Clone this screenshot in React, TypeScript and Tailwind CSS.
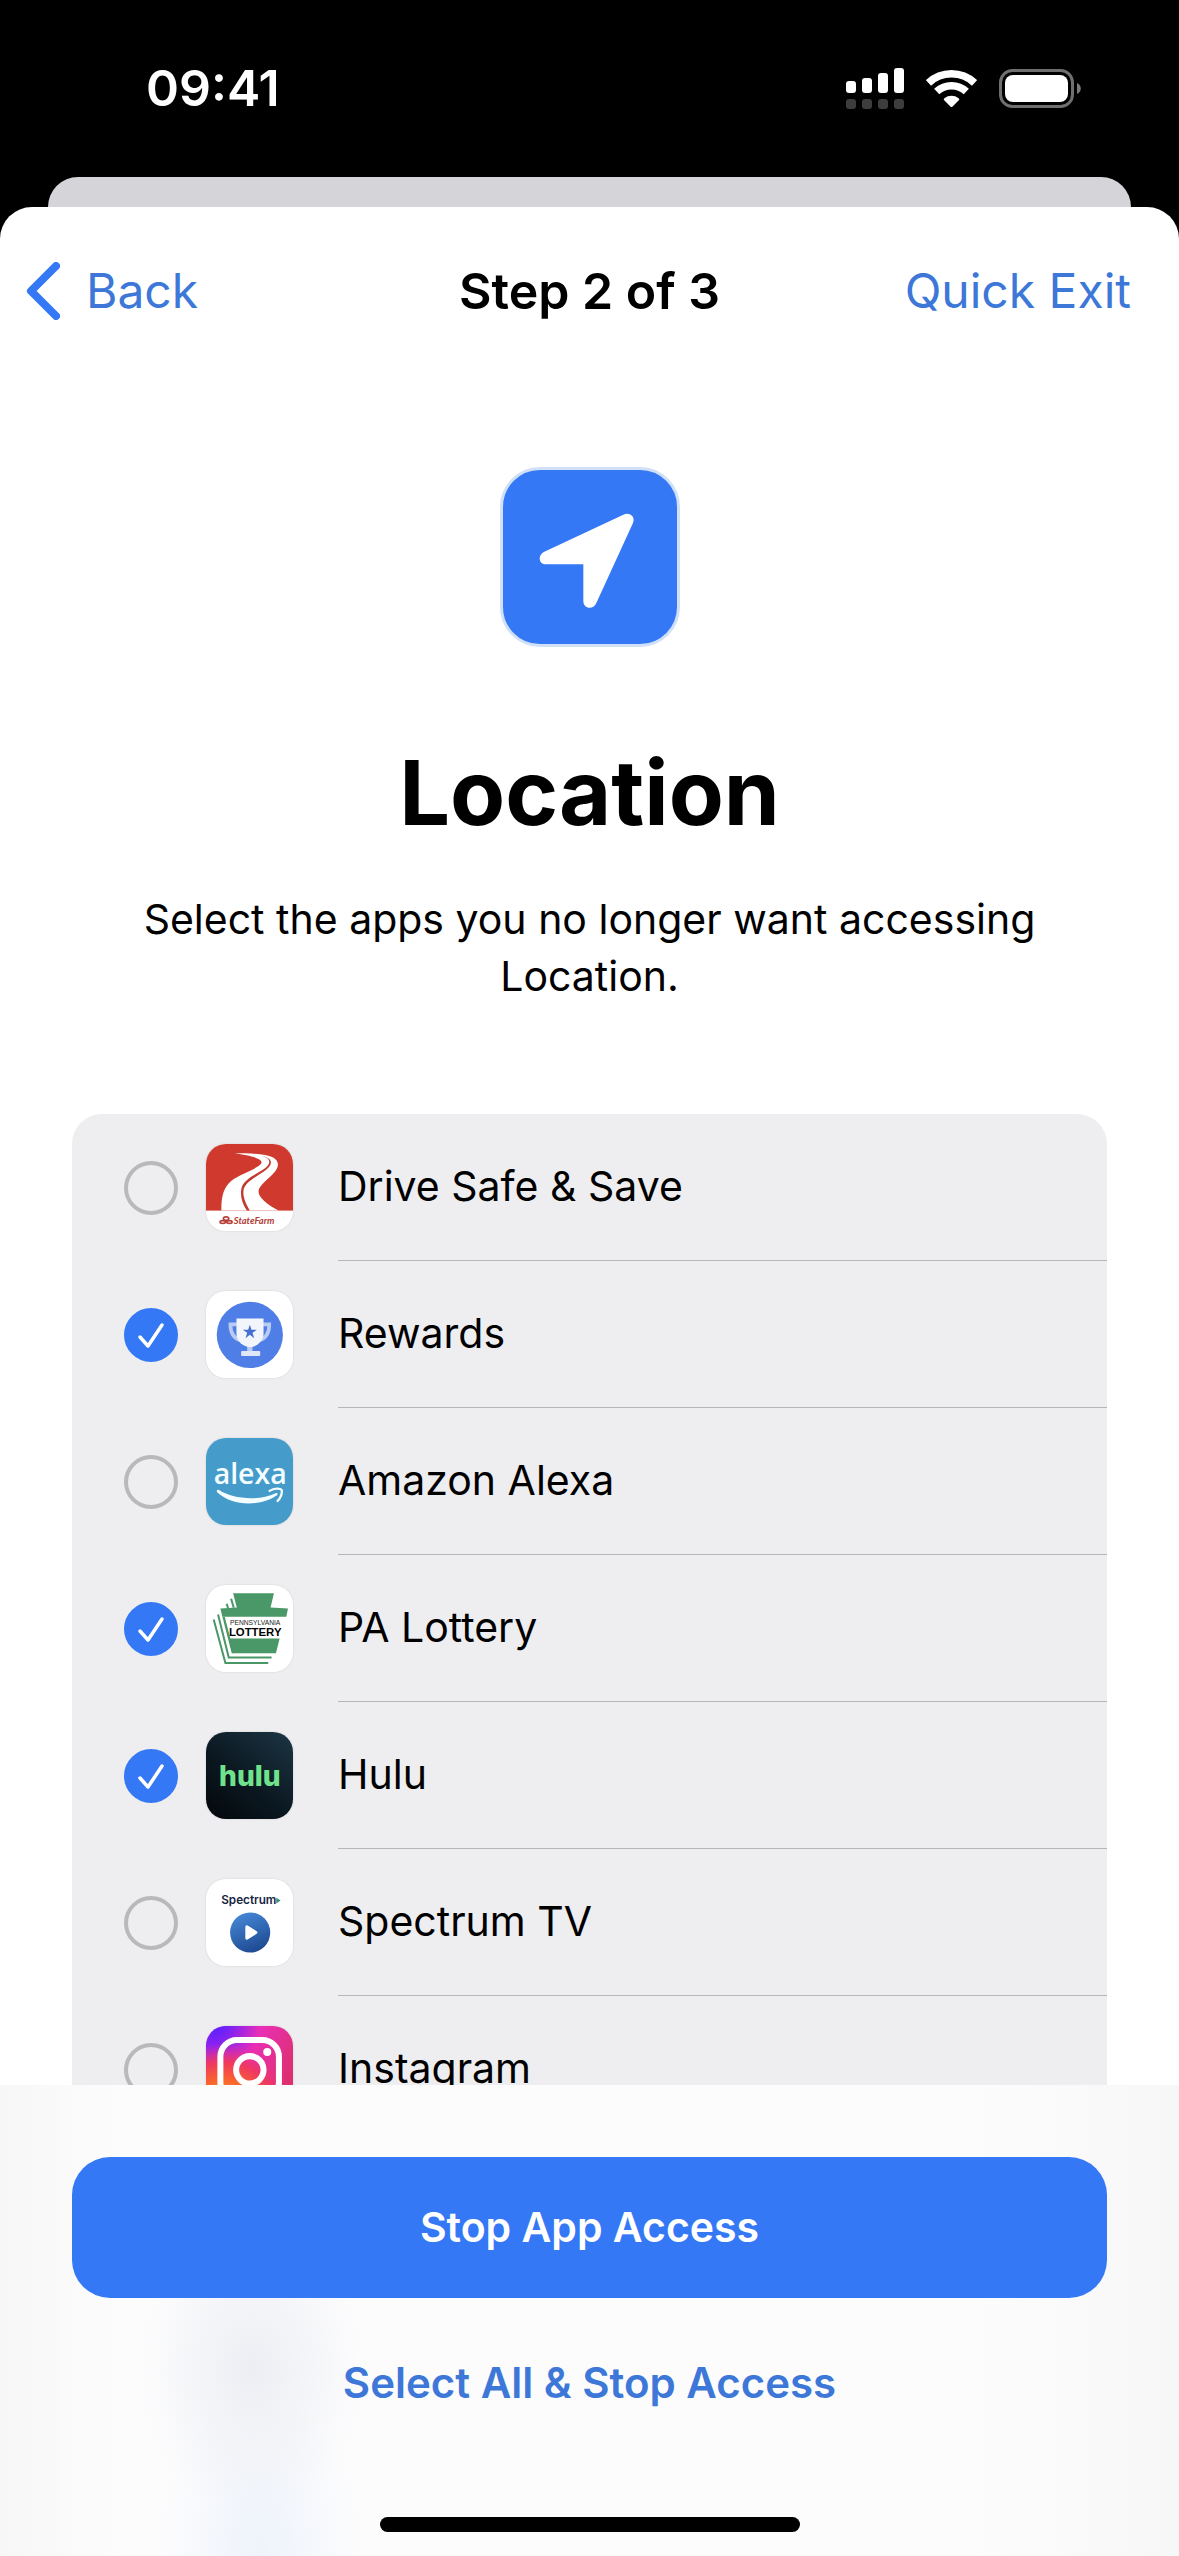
import { useState } from 'react';
import type { ReactNode } from 'react';

function StateFarmIcon() {
  return (
    <svg viewBox="0 0 260 260" className="size-full">
      <rect width="260" height="260" fill="#fff" />
      <rect width="260" height="199" fill="#d03a2e" />
      <path
        d="M86 28C125 28 160 29 186 35C220 44 222 66 203 86C186 106 160 122 157 140C156 160 182 180 217 199H46C45 160 52 130 76 110C104 88 146 78 164 60C176 44 130 34 86 28Z"
        fill="#fff"
      />
      <path
        d="M168 36C196 44 196 60 170 77C138 96 112 110 106 132C101 154 108 178 122 199H131C118 178 108 154 113 134C120 114 146 100 173 82C202 62 202 44 168 36Z"
        fill="#c2392f"
      />
      <g fill="none" stroke="#b8403a" strokeWidth="5">
        <ellipse cx="60" cy="223" rx="8" ry="5" />
        <ellipse cx="50" cy="233" rx="8" ry="4" />
        <ellipse cx="70" cy="233" rx="8" ry="4" />
      </g>
      <text x="83" y="238" fontSize="28" fontWeight="700" fontStyle="italic" fill="#b23a35" fontFamily="Lato, sans-serif">
        StateFarm
      </text>
    </svg>
  );
}

function RewardsIcon() {
  return (
    <svg viewBox="0 0 260 260" className="size-full">
      <rect width="260" height="260" fill="#fff" />
      <circle cx="131" cy="131" r="99" fill="#4f7fe6" />
      <path d="M92 100H73C73 126 84 142 104 148M170 100H189C189 126 178 142 158 148" fill="none" stroke="#b9cbf3" strokeWidth="11" />
      <rect x="123" y="160" width="16" height="22" fill="#b9cbf3" />
      <rect x="105" y="179" width="57" height="15" rx="3" fill="#dfe6f8" />
      <path d="M91 82H172V128C172 150 150 168 131 168C112 168 91 150 91 128Z" fill="#f2f5fc" />
      <path d="M131 101L136 116H152L139 125L144 141L131 131L118 141L123 125L110 116H126Z" fill="#4470cf" />
    </svg>
  );
}

function AlexaIcon() {
  return (
    <svg viewBox="0 0 260 260" className="size-full">
      <rect width="260" height="260" fill="#459bca" />
      <text x="132" y="137" fontSize="85" fontWeight="600" textAnchor="middle" fill="#f4fdff" fontFamily="Open Sans, sans-serif">
        alexa
      </text>
      <path d="M38 155C78 182 156 190 208 165C213 163 216 168 212 171C166 204 80 206 34 163C30 158 33 153 38 155Z" fill="#f4fdff" />
      <path d="M190 158C204 149 222 150 226 155C229 162 224 178 214 188" fill="none" stroke="#f4fdff" strokeWidth="7" strokeLinecap="round" />
    </svg>
  );
}

function LotteryIcon() {
  return (
    <svg viewBox="0 0 260 260" className="size-full">
      <rect width="260" height="260" fill="#fff" />
      <g fill="#4a9767">
        <path d="M81 25H203L193 67L245 70L240 95H49L43 70L92 67Z" />
        <path d="M68 160H220L209 204H81Z" />
        <path d="M49 95H56L84 204H77Z" />
      </g>
      <g fill="none" stroke="#4a9767" strokeWidth="6">
        <path d="M36 88L68 217H196" />
        <path d="M23 103L58 233H186" />
        <path d="M75 41L83 68" />
        <path d="M62 56L66 70" />
      </g>
      <text x="147" y="120" fontSize="20" textAnchor="middle" fill="#222" fontFamily="Liberation Sans, sans-serif">
        PENNSYLVANIA
      </text>
      <text x="147" y="151" fontSize="34" fontWeight="700" textAnchor="middle" fill="#000" fontFamily="Liberation Sans, sans-serif">
        LOTTERY
      </text>
    </svg>
  );
}

function HuluIcon() {
  return (
    <svg viewBox="0 0 260 260" className="size-full">
      <defs>
        <linearGradient id="hulu-bg" x1="1" y1="0" x2="0.2" y2="1">
          <stop offset="0" stopColor="#1c3644" />
          <stop offset="0.6" stopColor="#0b1821" />
          <stop offset="1" stopColor="#050b10" />
        </linearGradient>
      </defs>
      <rect width="260" height="260" fill="url(#hulu-bg)" />
      <text x="131" y="160" fontSize="84" fontWeight="800" textAnchor="middle" fill="#71e28c" fontFamily="Inter, sans-serif">
        hulu
      </text>
    </svg>
  );
}

function SpectrumIcon() {
  return (
    <svg viewBox="0 0 260 260" className="size-full">
      <defs>
        <linearGradient id="spectrum-disc" x1="0.3" y1="0" x2="0.7" y2="1">
          <stop offset="0" stopColor="#4587d6" />
          <stop offset="1" stopColor="#1c478f" />
        </linearGradient>
      </defs>
      <rect width="260" height="260" fill="#fff" />
      <text x="128" y="74" fontSize="35" fontWeight="600" textAnchor="middle" fill="#16263f" fontFamily="Inter, sans-serif">
        Spectrum
      </text>
      <path d="M210 56L223 64L210 73Z" fill="#3f8f78" />
      <circle cx="132" cy="160" r="60" fill="url(#spectrum-disc)" />
      <path d="M122 143L149 160L122 177Z" fill="#fff" stroke="#fff" strokeWidth="9" strokeLinejoin="round" />
    </svg>
  );
}

function InstagramIcon() {
  return (
    <svg viewBox="0 0 260 260" className="size-full">
      <defs>
        <linearGradient id="ig-base" x1="0" y1="0" x2="1" y2="0.5">
          <stop offset="0" stopColor="#b320f0" />
          <stop offset="0.5" stopColor="#ea2fb8" />
          <stop offset="1" stopColor="#dc3070" />
        </linearGradient>
        <radialGradient id="ig-corner" cx="0.12" cy="0" r="0.5">
          <stop offset="0" stopColor="#5a20ff" />
          <stop offset="1" stopColor="#5a20ff" stopOpacity="0" />
        </radialGradient>
        <radialGradient id="ig-warm" cx="0.2" cy="1.05" r="0.85">
          <stop offset="0" stopColor="#ffd255" />
          <stop offset="0.5" stopColor="#f9652c" />
          <stop offset="0.75" stopColor="#ef3860" />
          <stop offset="1" stopColor="#e8308c" stopOpacity="0" />
        </radialGradient>
      </defs>
      <rect width="260" height="260" fill="url(#ig-base)" />
      <rect width="260" height="260" fill="url(#ig-corner)" />
      <rect width="260" height="260" fill="url(#ig-warm)" />
      <rect x="43" y="42" width="175" height="175" rx="50" fill="none" stroke="#fff" strokeWidth="18" />
      <circle cx="131" cy="131" r="41" fill="none" stroke="#fff" strokeWidth="18" />
      <circle cx="183" cy="78" r="12" fill="#fff" />
    </svg>
  );
}

function SignalIcon() {
  return (
    <svg viewBox="0 0 58 41" className="h-[41px] w-[58px]" aria-hidden="true">
      <g fill="#fff">
        <rect x="0" y="13" width="10" height="12" rx="3" />
        <rect x="16" y="10" width="10" height="15" rx="3" />
        <rect x="32" y="5" width="10" height="20" rx="3" />
        <rect x="48" y="0" width="10" height="25" rx="3" />
      </g>
      <g fill="#3d3d3d">
        <rect x="0" y="31" width="10" height="10" rx="3" />
        <rect x="16" y="31" width="10" height="10" rx="3" />
        <rect x="32" y="31" width="10" height="10" rx="3" />
        <rect x="48" y="31" width="10" height="10" rx="3" />
      </g>
    </svg>
  );
}

function WifiIcon() {
  return (
    <svg viewBox="0 0 51 38" className="h-[38px] w-[51px]" aria-hidden="true">
      <g fill="none" stroke="#fff" strokeWidth="7.5">
        <path d="M2.5 12.9A33.7 33.7 0 0 1 48.5 12.9" />
        <path d="M10.7 21.6A21.7 21.7 0 0 1 40.3 21.6" />
      </g>
      <path d="M18.4 28.2A12 12 0 0 1 32.6 28.2Q34 29 32.8 30.3L26.6 36.6Q25.5 37.6 24.4 36.6L18.2 30.3Q17 29 18.4 28.2Z" fill="#fff" />
    </svg>
  );
}

function BatteryIcon() {
  return (
    <svg viewBox="0 0 82 39" className="h-[39px] w-[82px]" aria-hidden="true">
      <rect x="1.5" y="1.5" width="72" height="36" rx="12" fill="none" stroke="#6f6f6f" strokeWidth="3" />
      <rect x="6" y="6" width="63" height="27" rx="8" fill="#fff" />
      <path d="M78 14C83 16 83 23 78 25Z" fill="#7a7a7a" />
    </svg>
  );
}

interface AppEntry {
  id: string;
  name: string;
  icon: ReactNode;
}

const apps: AppEntry[] = [
  { id: 'drive-safe', name: 'Drive Safe & Save', icon: <StateFarmIcon /> },
  { id: 'rewards', name: 'Rewards', icon: <RewardsIcon /> },
  { id: 'alexa', name: 'Amazon Alexa', icon: <AlexaIcon /> },
  { id: 'pa-lottery', name: 'PA Lottery', icon: <LotteryIcon /> },
  { id: 'hulu', name: 'Hulu', icon: <HuluIcon /> },
  { id: 'spectrum', name: 'Spectrum TV', icon: <SpectrumIcon /> },
  { id: 'instagram', name: 'Instagram', icon: <InstagramIcon /> },
];

interface AppRowProps {
  app: AppEntry;
  checked: boolean;
  onToggle: () => void;
}

function AppRow({ app, checked, onToggle }: AppRowProps) {
  return (
    <li>
      <label htmlFor={app.id} className="flex h-[147px] items-stretch pl-[52px]">
        <span className="grid w-[54px] place-items-center">
          <input
            id={app.id}
            type="checkbox"
            checked={checked}
            onChange={onToggle}
            className="peer size-[54px] appearance-none rounded-full border-4 border-[#b9b9bb] [grid-area:1/1] checked:border-[#3478f6] checked:bg-[#3478f6]"
          />
          <svg viewBox="0 0 54 54" className="pointer-events-none hidden size-[54px] [grid-area:1/1] peer-checked:block" aria-hidden="true">
            <path d="M16 29L24 38L38 17" fill="none" stroke="#fff" strokeWidth="3.5" strokeLinecap="round" strokeLinejoin="round" />
          </svg>
        </span>
        <span className="ml-7 flex items-center">
          <span className="size-[87px] overflow-hidden rounded-[20px] shadow-[0_0_2px_#00000026]">{app.icon}</span>
        </span>
        <span className="ml-[45px] flex flex-1 items-center border-b border-[#b6b6b9] text-[41px]">{app.name}</span>
      </label>
    </li>
  );
}

export default function App() {
  const [selected, setSelected] = useState<string[]>(['rewards', 'pa-lottery', 'hulu']);

  const toggle = (id: string) => {
    setSelected((prev) => (prev.includes(id) ? prev.filter((x) => x !== id) : [...prev, id]));
  };

  return (
    <div className="flex h-screen flex-col bg-black font-['Inter',sans-serif] text-black">
      {/* Status bar */}
      <div className="flex h-[177px] shrink-0 items-center justify-between pr-[98px] pl-[146px]">
        <time className="text-[50px] font-semibold text-white">09:41</time>
        <div className="flex items-center gap-[22px]">
          <SignalIcon />
          <WifiIcon />
          <BatteryIcon />
        </div>
      </div>

      {/* Edge of the sheet underneath */}
      <div className="mx-12 h-[30px] shrink-0 rounded-t-[30px] bg-[#d5d4d9]" />

      <div className="flex min-h-0 flex-1 flex-col overflow-hidden rounded-t-[32px] bg-white">
        <header className="grid h-[168px] shrink-0 grid-cols-[1fr_auto_1fr] items-center px-[26px]">
          <button type="button" className="flex items-center gap-[26px] justify-self-start text-[48px] text-[#3d77d8]">
            <svg viewBox="0 0 34 58" className="h-[58px] w-[34px]" aria-hidden="true">
              <path d="M30 4L5 29L30 54" fill="none" stroke="#3478f6" strokeWidth="8" strokeLinecap="round" strokeLinejoin="round" />
            </svg>
            Back
          </button>
          <h2 className="text-[50px] font-semibold">Step 2 of 3</h2>
          <button type="button" className="justify-self-end pr-[22px] text-[48px] text-[#3d77d8]">
            Quick Exit
          </button>
        </header>

        <main className="min-h-0 flex-1 overflow-y-auto px-[72px] pt-[92px] [scrollbar-width:none]">
          <div className="flex flex-col items-center text-center">
            <div className="size-[180px] overflow-hidden rounded-[40px] border-3 border-[#cfe0f7] bg-[#3478f6]">
              <svg viewBox="9 9 522 522" className="size-full" aria-hidden="true">
                <path
                  d="M370 143L133 254C112 264 116 292 138 292H250V402C250 426 279 430 289 408L399 168C407 150 390 134 370 143Z"
                  fill="#fff"
                />
              </svg>
            </div>
            <h1 className="mt-[92px] text-[90px] leading-[108px] font-bold">Location</h1>
            <p className="mt-[44px] text-[41px] leading-[57px]">
              Select the apps you no longer want accessing
              <br />
              Location.
            </p>
          </div>

          <ul className="mt-[109px] overflow-hidden rounded-[30px] bg-[#eeeef0]">
            {apps.map((app) => (
              <AppRow key={app.id} app={app} checked={selected.includes(app.id)} onToggle={() => toggle(app.id)} />
            ))}
          </ul>
        </main>

        {/* Bottom actions */}
        <footer className="flex shrink-0 flex-col items-center bg-[#fcfcfd] bg-[radial-gradient(110px_150px_at_252px_285px,#eceef3,transparent),radial-gradient(100px_150px_at_260px_460px,#eef3fb,transparent),linear-gradient(to_right,#f7f7f8,transparent_120px,transparent_calc(100%-200px),#f7f7f8)] px-[72px] pt-[72px] pb-6">
          <button type="button" className="h-[141px] w-full rounded-[38px] bg-[#3478f6] text-[41px] font-semibold text-white">
            Stop App Access
          </button>
          <button
            type="button"
            onClick={() => setSelected(apps.map((a) => a.id))}
            className="mt-[55px] text-[42px] leading-[60px] font-semibold text-[#3d77d8]"
          >
            Select All &amp; Stop Access
          </button>
          <div className="mt-[104px] h-[15px] w-[420px] rounded-full bg-black" />
        </footer>
      </div>
    </div>
  );
}
